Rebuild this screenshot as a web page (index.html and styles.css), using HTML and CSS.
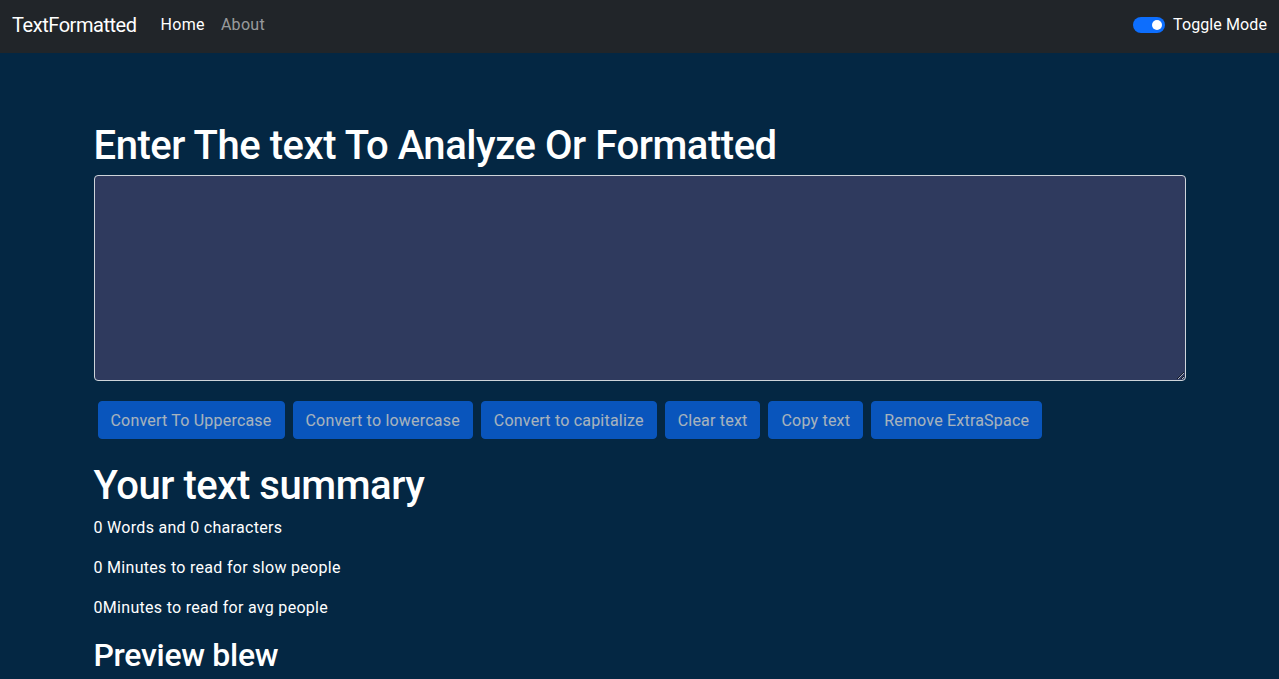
FILE: index.html
```html
<!DOCTYPE html>
<html lang="en">
<head>
<meta charset="utf-8">
<title>TextFormatted</title>
<link rel="stylesheet" href="styles.css">
</head>
<body>
<nav class="navbar">
  <div class="nav-inner">
    <div class="nav-left">
      <a class="brand" href="#">TextFormatted</a>
      <ul class="nav-links">
        <li><a class="nav-link active" href="#">Home</a></li>
        <li><a class="nav-link" href="#">About</a></li>
      </ul>
    </div>
    <label class="switch">
      <span class="switch-track"><span class="switch-knob"></span></span>
      <span class="switch-label">Toggle Mode</span>
    </label>
  </div>
</nav>
<div class="alert-slot"></div>
<main class="container">
  <section class="section">
    <h1 class="title">Enter The text To Analyze Or Formatted</h1>
    <div class="field">
      <textarea class="textarea" rows="8"></textarea>
    </div>
    <div class="buttons">
      <button class="btn" disabled>Convert To Uppercase</button>
      <button class="btn" disabled>Convert to lowercase</button>
      <button class="btn" disabled>Convert to capitalize</button>
      <button class="btn" disabled>Clear text</button>
      <button class="btn" disabled>Copy text</button>
      <button class="btn" disabled>Remove ExtraSpace</button>
    </div>
  </section>
  <section class="section">
    <h1 class="title">Your text summary</h1>
    <p class="line">0 Words and 0 characters</p>
    <p class="line">0 Minutes to read for slow people</p>
    <p class="line">0Minutes to read for avg people</p>
    <h2 class="subtitle">Preview blew</h2>
  </section>
</main>
</body>
</html>
```
FILE: styles.css
```css
* { box-sizing: border-box; }
html, body { margin: 0; padding: 0; }
body {
  background: #042743;
  color: #ffffff;
  font-family: Roboto, "Noto Sans", "Liberation Sans", sans-serif;
  font-size: 16px;
  line-height: 1.5;
  letter-spacing: 0.3px;
}
.navbar {
  background: #212529;
  height: 53px;
}
.nav-inner {
  height: 100%;
  padding: 0 12px 3px;
  display: flex;
  align-items: center;
  justify-content: space-between;
}
.nav-left {
  display: flex;
  align-items: center;
}
.brand {
  color: #fff;
  text-decoration: none;
  font-size: 20px;
  line-height: 30px;
  letter-spacing: -0.45px;
  margin-right: 16px;
}
.nav-links {
  list-style: none;
  margin: 0;
  padding: 0;
  display: flex;
}
.nav-link {
  display: block;
  padding: 8px;
  color: rgba(255,255,255,0.55);
  text-decoration: none;
  line-height: 24px;
}
.nav-link.active { color: #fff; }
.switch {
  display: flex;
  align-items: center;
  gap: 8px;
}
.switch-track {
  width: 32px;
  height: 16px;
  border-radius: 8px;
  background: #0d6efd;
  display: flex;
  align-items: center;
  justify-content: flex-end;
  padding-right: 3px;
}
.switch-knob {
  width: 10px;
  height: 10px;
  border-radius: 50%;
  background: #fff;
}
.switch-label {
  line-height: 24px;
  letter-spacing: 0.1px;
}
.alert-slot { height: 50px; }
.container {
  max-width: 1092px;
  margin: 0 auto;
}
.section { margin: 16px 0; }
.title {
  font-size: 40px;
  font-weight: 500;
  line-height: 1.2;
  letter-spacing: -0.45px;
  padding-top: 3px;
  margin: 0 0 5px;
}
.subtitle {
  font-size: 32px;
  font-weight: 500;
  line-height: 1.2;
  letter-spacing: -0.3px;
  padding-top: 1px;
  margin: 0 0 7px;
}
.field { margin-bottom: 16px; }
.textarea {
  display: block;
  width: 100%;
  height: 206px;
  padding: 6px 12px;
  background: #2f3a5e;
  color: #fff;
  border: 1px solid #ced4da;
  border-radius: 4px;
  font: inherit;
  resize: vertical;
}
.buttons {
  display: flex;
  flex-wrap: wrap;
}
.btn {
  margin: 4px;
  padding: 7px 12px 5px;
  font: inherit;
  letter-spacing: 0.2px;
  line-height: 24px;
  color: #fff;
  background: #0d6efd;
  border: 1px solid #0d6efd;
  border-radius: 4px;
  opacity: 0.65;
}
.line {
  margin: 0 0 15px;
  padding-top: 1px;
}
```
